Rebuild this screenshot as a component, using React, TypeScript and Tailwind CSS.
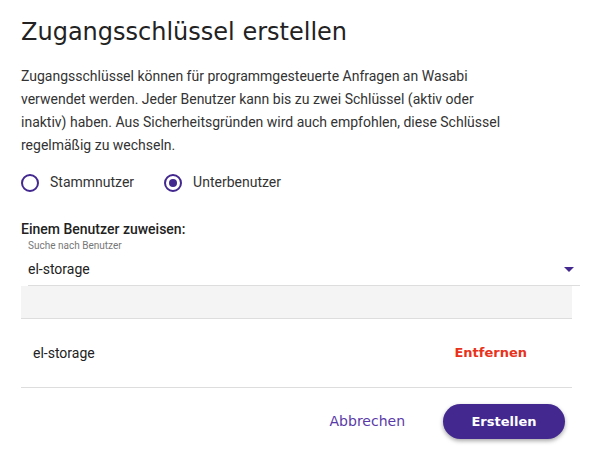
import React, { useState } from 'react';

const heading = { fontFamily: '"DejaVu Sans", "Open Sans", sans-serif' };
const body = { fontFamily: 'Roboto, "Liberation Sans", sans-serif' };

interface RadioProps {
  label: string;
  checked: boolean;
  onSelect: () => void;
}

const Radio: React.FC<RadioProps> = ({ label, checked, onSelect }) => (
  <button type="button" onClick={onSelect} className="flex items-center gap-[11px]">
    <span className="flex h-[18px] w-[18px] items-center justify-center rounded-full border-2 border-[#42288f]">
      {checked && <span className="h-[8px] w-[8px] rounded-full bg-[#42288f]" />}
    </span>
    <span className="text-[14px] text-[#333]">{label}</span>
  </button>
);

export default function App() {
  const [mode, setMode] = useState<'root' | 'sub'>('sub');

  return (
    <div className="h-[462px] w-[595px] bg-white pl-[21px] pr-[23px] pt-[18px]" style={body}>
      <h1 className="text-[24px] leading-[28px] text-[#222]" style={heading}>
        Zugangsschlüssel erstellen
      </h1>

      <p className="mt-[19px] w-[500px] text-[14px] leading-[23px] text-[#333]">
        Zugangsschlüssel können für programmgesteuerte Anfragen an Wasabi verwendet werden. Jeder Benutzer kann
        bis zu zwei Schlüssel (aktiv oder inaktiv) haben. Aus Sicherheitsgründen wird auch empfohlen, diese
        Schlüssel regelmäßig zu wechseln.
      </p>

      <div className="mt-[15px] flex items-center gap-[30px]">
        <Radio label="Stammnutzer" checked={mode === 'root'} onSelect={() => setMode('root')} />
        <Radio label="Unterbenutzer" checked={mode === 'sub'} onSelect={() => setMode('sub')} />
      </div>

      <div className="mt-[27px] text-[14px] font-medium leading-[18px] text-[#222]">Einem Benutzer zuweisen:</div>

      <div className="ml-[7px] mr-[-8px] mt-[1px] border-b border-[#ddd]">
        <div className="text-[10px] leading-[14px] text-[#777]">Suche nach Benutzer</div>
        <div className="flex items-center justify-between pb-[6px] pt-[6px]">
          <span className="text-[14px] leading-[20px] text-[#222]">el-storage</span>
          <svg width="10" height="5" viewBox="0 0 10 5" className="mr-[6px]">
            <path d="M0 0h10L5 5z" fill="#42288f" />
          </svg>
        </div>
      </div>

      <div className="h-[33px] border-b border-[#ddd] bg-[#f4f4f4]" />

      <div className="flex h-[69px] items-center justify-between border-b border-[#ddd] pl-[12px] pr-[45px]">
        <span className="text-[14px] text-[#222]">el-storage</span>
        <button type="button" className="text-[13px] font-bold text-[#e8321c]" style={heading}>
          Entfernen
        </button>
      </div>

      <div className="mt-[16px] flex items-center justify-end gap-[38px] pr-[7px]" style={heading}>
        <button type="button" className="text-[14px] text-[#5a3aa8]">
          Abbrechen
        </button>
        <button
          type="button"
          className="h-[35px] w-[122px] rounded-full bg-[#42288f] text-[13px] font-semibold text-white shadow-[0_2px_4px_rgba(0,0,0,0.35)]"
        >
          Erstellen
        </button>
      </div>
    </div>
  );
}
